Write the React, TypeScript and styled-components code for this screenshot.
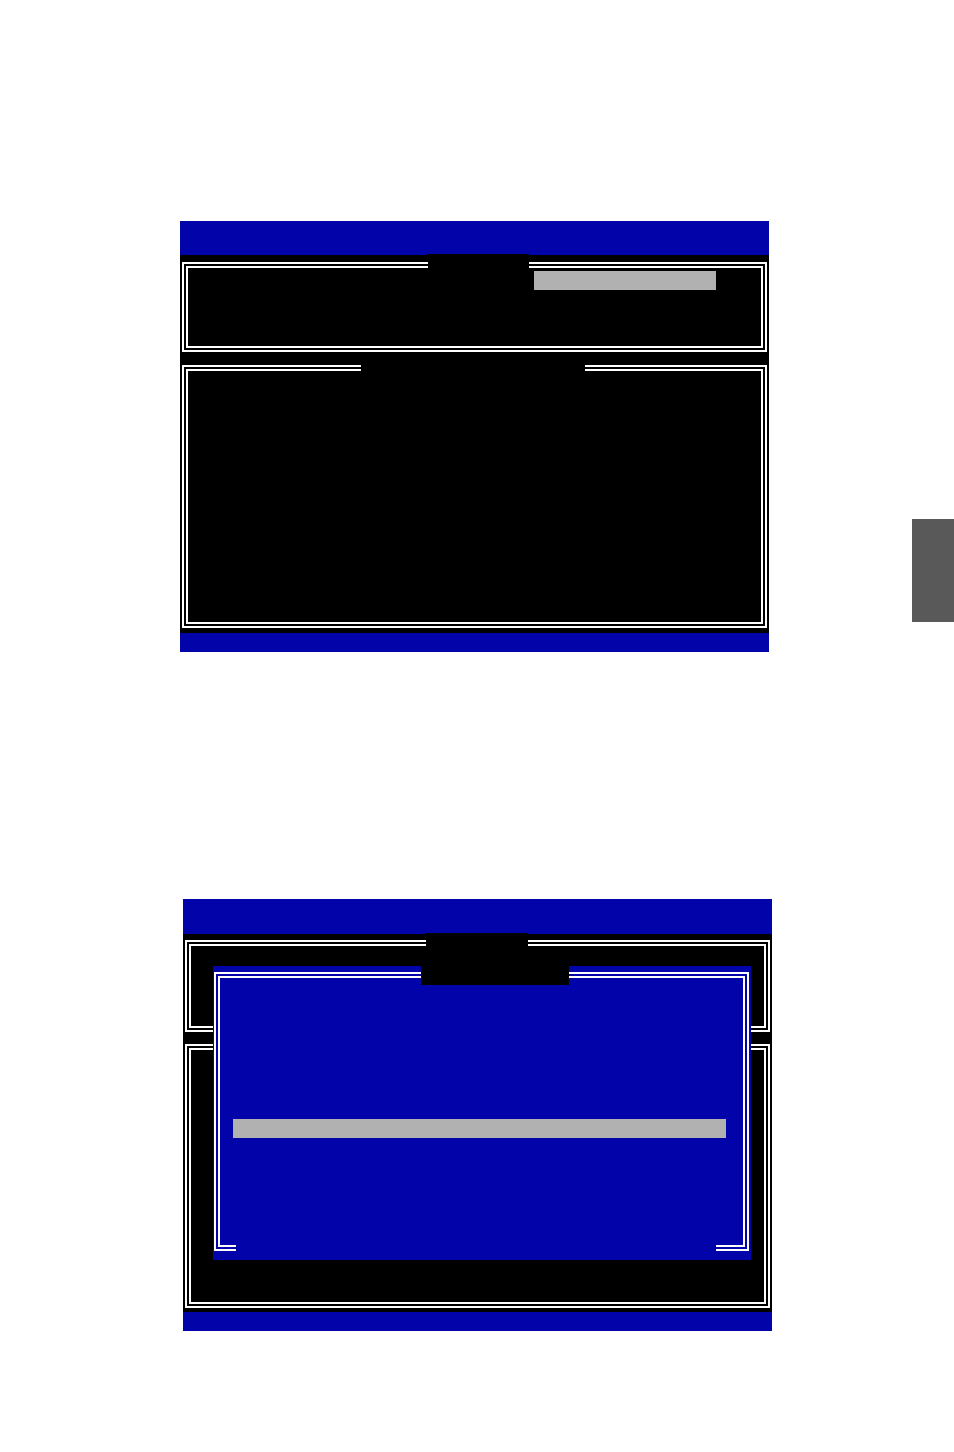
import styled, { createGlobalStyle } from "styled-components";

const BLUE = "#0303aa";
const GRAY = "#b1b1b1";

const GlobalStyle = createGlobalStyle`
  html, body {
    margin: 0;
    padding: 0;
    background: #fff;
    font-family: "Liberation Mono", "DejaVu Sans Mono", monospace;
  }
`;

const Page = styled.div`
  position: relative;
  width: 954px;
  min-height: 1452px;
  padding-top: 221px;
  box-sizing: border-box;
  display: flex;
  flex-direction: column;
`;

const Screen = styled.div<{ $left: number; $gap?: number }>`
  width: 589px;
  margin-left: ${({ $left }) => $left}px;
  margin-top: ${({ $gap = 0 }) => $gap}px;
  display: flex;
  flex-direction: column;
  position: relative;
`;

const Bar = styled.div<{ $h: number }>`
  height: ${({ $h }) => $h}px;
  background: ${BLUE};
`;

const Body = styled.div<{ $top: number; $bottom: number; $gap: number }>`
  background: #000;
  display: flex;
  flex-direction: column;
  gap: ${({ $gap }) => $gap}px;
  padding: ${({ $top }) => $top}px 2px ${({ $bottom }) => $bottom}px;
`;

// double white rule: 2px line, 2px black, 2px line
const Frame = styled.div<{ $h: number }>`
  position: relative;
  height: ${({ $h }) => $h}px;
  box-sizing: border-box;
  border: 2px solid #fff;
  box-shadow: inset 0 0 0 2px #000, inset 0 0 0 4px #fff;
  padding: 7px 0 0 350px;
`;

const Tab = styled.div<{ $left: number; $top: number; $w: number; $h: number; $bg?: string }>`
  position: absolute;
  left: ${({ $left }) => $left}px;
  top: ${({ $top }) => $top}px;
  width: ${({ $w }) => $w}px;
  height: ${({ $h }) => $h}px;
  background: ${({ $bg = "#000" }) => $bg};
`;

const Highlight = styled.div<{ $w: number }>`
  width: ${({ $w }) => $w}px;
  height: 19px;
  background: ${GRAY};
`;

const Dialog = styled.div`
  position: absolute;
  left: 30px;
  top: 67px;
  width: 538px;
  height: 294px;
  box-sizing: border-box;
  background: ${BLUE};
  padding: 6px 2px 9px 1px;
  display: flex;
`;

const DialogFrame = styled.div`
  flex: 1;
  box-sizing: border-box;
  border: 2px solid #fff;
  box-shadow: inset 0 0 0 2px ${BLUE}, inset 0 0 0 4px #fff;
  padding: 145px 0 0 17px;
`;

const SideTab = styled.div`
  position: absolute;
  right: 0;
  top: 519px;
  width: 42px;
  height: 103px;
  background: #595959;
`;

export default function App() {
  return (
    <>
      <GlobalStyle />
      <Page>
        <Screen $left={180}>
          <Bar $h={34} />
          <Body $top={7} $bottom={5} $gap={13}>
            <Frame $h={90}>
              <Tab $left={244} $top={-10} $w={101} $h={16} />
              <Highlight $w={182} />
            </Frame>
            <Frame $h={263}>
              <Tab $left={177} $top={-4} $w={224} $h={10} />
            </Frame>
          </Body>
          <Bar $h={19} />
        </Screen>

        <Screen $left={183} $gap={247}>
          <Bar $h={35} />
          <Body $top={6} $bottom={4} $gap={12}>
            <Frame $h={92}>
              <Tab $left={239} $top={-9} $w={102} $h={16} />
            </Frame>
            <Frame $h={264} />
          </Body>
          <Bar $h={19} />
          <Dialog>
            <Tab $left={208} $top={0} $w={148} $h={19} />
            <DialogFrame>
              <Highlight $w={493} />
            </DialogFrame>
            <Tab $left={23} $top={276} $w={480} $h={12} $bg={BLUE} />
          </Dialog>
        </Screen>

        <SideTab />
      </Page>
    </>
  );
}
